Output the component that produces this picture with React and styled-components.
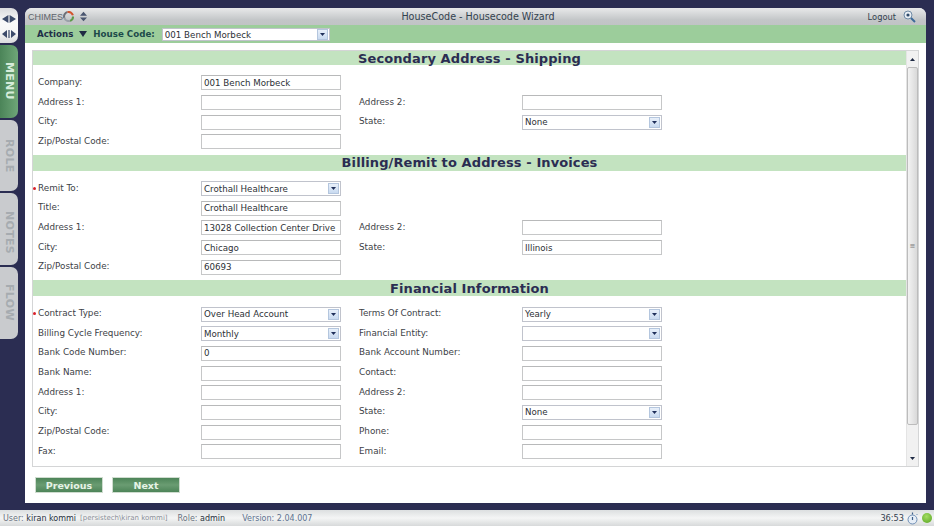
import styled, { createGlobalStyle } from "styled-components"

const Global = createGlobalStyle`
  html, body { margin: 0; padding: 0; height: 100%; overflow: hidden; }
  body { background: #2b2d52; font-family: "DejaVu Sans", Verdana, sans-serif; font-size: 8.8px; color: #3c4048; }
`

const Page = styled.div`
  width: 934px;
  height: 526px;
  display: grid;
  grid-template: 510px 16px / 25px 901px 8px;
  grid-template-areas:
    "side win ."
    "foot foot foot";
`

const Side = styled.div`
  grid-area: side;
  display: flex;
  flex-direction: column;
  align-items: flex-start;
  padding-top: 8px;
  gap: 2px;
`

const Arrows = styled.div`
  width: 18px;
  height: 35px;
  box-sizing: border-box;
  padding-top: 7px;
  display: flex;
  flex-direction: column;
  align-items: center;
  gap: 7px;
  background: linear-gradient(#d9dadd, #fafafa 40%, #f6f6f6 70%, #d9dadd);
  border-radius: 0 7px 7px 0;
`

const Tab = styled.div`
  width: 18px;
  height: ${({ $h }) => $h}px;
  display: flex;
  justify-content: flex-start;
  align-items: center;
  box-sizing: border-box;
  padding-top: ${({ $pad }) => $pad}px;
  writing-mode: vertical-rl;
  font-size: 11px;
  font-weight: bold;
  line-height: 16px;
  letter-spacing: 0.3px;
  border-radius: 0 7px 7px 0;
  color: ${({ $active }) => ($active ? "#d6ecda" : "#a6abb0")};
  background: ${({ $active }) =>
    $active ? "linear-gradient(90deg, #4b8458, #6ea678)" : "#c9cbce"};
`

const Win = styled.div`
  grid-area: win;
  margin: 8px 0 7px;
  background: #fff;
  border-radius: 7px 7px 0 0;
  display: flex;
  flex-direction: column;
`

const TitleBar = styled.div`
  height: 17px;
  flex: none;
  border-radius: 7px 7px 0 0;
  background: linear-gradient(#e8e9ea, #c3c6c8 70%, #c0c3c5);
  display: grid;
  grid-template-columns: 1fr auto 1fr;
  align-items: center;
  padding: 0 10px 0 3px;
`

const Brand = styled.div`
  display: flex;
  align-items: center;
  gap: 6px;
  font-family: "Liberation Sans", Arial, sans-serif;
  font-size: 9px;
  color: #5f646c;
`

const BrandName = styled.span`
  display: flex;
  align-items: center;
`

const WinTitle = styled.div`
  font-size: 9.6px;
  color: #33424f;
  margin-left: 12px;
`

const TitleRight = styled.div`
  display: flex;
  justify-content: flex-end;
  align-items: center;
  gap: 7px;
  font-size: 8.3px;
  color: #33424f;
`

const ActionBar = styled.div`
  height: 18px;
  flex: none;
  box-sizing: border-box;
  background: #9ccd9b;
  display: flex;
  align-items: center;
  padding-left: 12px;
  font-weight: bold;
  font-size: 8.7px;
  color: #1f2f48;
`

const Actions = styled.span`
  display: flex;
  align-items: center;
  gap: 6px;
  margin-right: 6px;
`

const HouseLabel = styled.span`
  color: #1d4a4a;
  margin-right: 7px;
`

const Panel = styled.div`
  margin: 7px 7px 0 7px;
  height: 417px;
  flex: none;
  box-sizing: border-box;
  border: 1px solid #d4d5d6;
  display: flex;
`

const Form = styled.div`
  flex: 1;
  min-width: 0;
`

const Section = styled.div`
  height: ${({ $h }) => $h}px;
  margin-top: ${({ $top }) => $top}px;
  background: #c3e3c0;
  display: flex;
  align-items: center;
  justify-content: center;
  font-size: 13px;
  font-weight: bold;
  letter-spacing: 0.1px;
  color: #2b2d52;
`

const Rows = styled.div`
  display: grid;
  grid-template-columns: 163px 140px 18px 163px 140px;
  grid-auto-rows: 19.7px;
  padding: ${({ $top }) => $top}px 0 0 5px;
  align-items: center;
`

const Label = styled.div`
  position: relative;
  color: #3d4247;
  margin-top: -2px;
  grid-column: ${({ $col }) => $col};
`

const Req = styled.span`
  position: absolute;
  left: -5px;
  top: 4px;
  width: 3px;
  height: 3px;
  border-radius: 50%;
  background: #d8202a;
`

const Field = styled.input`
  grid-column: ${({ $col }) => $col};
  width: 140px;
  height: 15px;
  box-sizing: border-box;
  margin: 0;
  padding: 0 2px;
  border: 1px solid #c6c7c8;
  border-top-color: #b8b9ba;
  background: #fff;
  font: 8.7px "DejaVu Sans", Verdana, sans-serif;
  color: #2c3036;
  outline: none;
`

const Select = styled.div`
  grid-column: ${({ $col }) => $col};
  width: 140px;
  height: 15px;
  box-sizing: border-box;
  border: 1px solid #c0c3cc;
  display: flex;
  align-items: center;
  padding: 0 1px 0 2px;
  font-size: 8.7px;
  color: #2c3036;
  background: #fff;
`

const HouseSelect = styled(Select)`
  width: 168px;
  height: 13px;
  margin-top: 1px;
  font-weight: normal;
`

const SelectBtn = styled.span`
  width: 11px;
  height: 11px;
  margin-left: auto;
  box-sizing: border-box;
  border: 1px solid #b4c6de;
  background: linear-gradient(#e8f0fa, #c9daf0);
  display: flex;
  align-items: center;
  justify-content: center;
`

const Scroll = styled.div`
  width: 12px;
  flex: none;
  box-sizing: border-box;
  background: #f1f1f1;
  display: flex;
  flex-direction: column;
  align-items: center;
  border-left: 1px solid #e4e4e4;
`

const ScrollEnd = styled.div`
  height: 16px;
  flex: none;
  display: flex;
  align-items: center;
  justify-content: center;
`

const Thumb = styled.div`
  width: 11px;
  flex: 1;
  box-sizing: border-box;
  margin-bottom: 25px;
  border: 1px solid #bcbcbc;
  border-radius: 2px;
  background: linear-gradient(90deg, #f3f3f3, #d9d9d9);
  display: flex;
  align-items: center;
  justify-content: center;
  color: #7a7a7a;
  font-size: 7px;
`

const Buttons = styled.div`
  display: flex;
  gap: 9px;
  margin: 10px 0 0 10px;
`

const Button = styled.button`
  width: 68px;
  height: 16px;
  padding: 0;
  border: 1px solid #cfdccf;
  background: linear-gradient(#4d8458, #6a9c72 50%, #4d8458);
  color: #e6f3e6;
  font: bold 9.5px "DejaVu Sans", Verdana, sans-serif;
`

const Footer = styled.div`
  grid-area: foot;
  background: linear-gradient(#dcdfe0, #f4f5f5 50%, #d7d9da);
  display: flex;
  align-items: center;
  justify-content: space-between;
  padding: 0 2px 0 3px;
  font-size: 8px;
  color: #6b7380;
`

const FootLeft = styled.div`
  display: flex;
  align-items: center;
`

const Strong = styled.span`
  color: #26303c;
`

const Tiny = styled.span`
  font-size: 7px;
  color: #8a8f98;
  margin: 0 10px 0 4px;
`

const Version = styled.span`
  color: #5d7290;
  margin-left: 17px;
`

const FootRight = styled.div`
  display: flex;
  align-items: center;
  gap: 3px;
  font-size: 8.2px;
  color: #33424f;
`

const Led = styled.span`
  width: 10px;
  height: 10px;
  margin-left: 1px;
  border-radius: 50%;
  background: radial-gradient(circle at 45% 35%, #a4dd62, #55a320);
`

const Tri = ({ size = 5, down = true, color = "#1f2a44" }) => (
  <svg width={size + 2} height={size} viewBox="0 0 7 5" preserveAspectRatio="none">
    <path d={down ? "M0 0h7L3.5 5z" : "M0 5h7L3.5 0z"} fill={color} />
  </svg>
)

const SideArrows = () => (
  <>
    <svg width="14" height="8" viewBox="0 0 14 8">
      <path d="M0 4L6.4 0v8zM14 4L7.6 0v8z" fill="#3c4a6a" />
    </svg>
    <svg width="14" height="8" viewBox="0 0 14 8">
      <path d="M0 4L5 0v8zM14 4L9 0v8z" fill="#3c4a6a" />
      <path d="M6.4 0h1.2v8H6.4z" fill="#3c4a6a" />
    </svg>
  </>
)

const ChimesLogo = () => (
  <svg width="11" height="11" viewBox="0 0 12 12" fill="none" strokeWidth="2.2">
    <path d="M1.4 7.5A5 5 0 0 1 5 1.1" stroke="#6d7078" />
    <path d="M5 1.1a5 5 0 0 1 5.8 3.6" stroke="#d2542e" />
    <path d="M11 6a5 5 0 0 1-3.5 4.8" stroke="#5d9a4a" />
    <path d="M7.5 10.8a5 5 0 0 1-6-3.3" stroke="#9aa0a8" />
  </svg>
)

const UpDown = () => (
  <svg width="7" height="11" viewBox="0 0 8 11">
    <path d="M4 0l4 4.5H0zM4 11L0 6.5h8z" fill="#4a5670" />
  </svg>
)

const Magnifier = () => (
  <svg width="13" height="13" viewBox="0 0 13 13" fill="none">
    <circle cx="5" cy="5" r="4" fill="#e8eef4" stroke="#6f8aa5" />
    <circle cx="5" cy="5" r="1.6" fill="#2f4a6a" />
    <path d="M8 8l4 4" stroke="#3c6a9a" strokeWidth="2" />
  </svg>
)

const Stopwatch = () => (
  <svg width="11" height="13" viewBox="0 0 11 13" fill="none">
    <circle cx="5.5" cy="7.5" r="4.5" fill="#e6eef7" stroke="#6f8fb5" />
    <path d="M5.5 0.5v2M5.5 5v3" stroke="#3c5f8a" strokeWidth="1.2" />
    <path d="M9.5 2l1 1" stroke="#6f8fb5" />
  </svg>
)

const ArrowDown = () => (
  <svg width="5" height="3" viewBox="0 0 5 3">
    <path d="M0 0h5L2.5 3z" fill="#1f2f5a" />
  </svg>
)

const Input = ({ col, value = "" }) => <Field $col={col} value={value} readOnly />

const Drop = ({ col, value = "" }) => (
  <Select $col={col}>
    {value}
    <SelectBtn>
      <ArrowDown />
    </SelectBtn>
  </Select>
)

const shipping = [
  { l: "Company:", v: "001 Bench Morbeck" },
  { l: "Address 1:", l2: "Address 2:", f2: "" },
  { l: "City:", l2: "State:", s2: "None" },
  { l: "Zip/Postal Code:" },
]

const billing = [
  { l: "Remit To:", req: true, s: "Crothall Healthcare" },
  { l: "Title:", v: "Crothall Healthcare" },
  { l: "Address 1:", v: "13028 Collection Center Drive", l2: "Address 2:", f2: "" },
  { l: "City:", v: "Chicago", l2: "State:", f2: "Illinois" },
  { l: "Zip/Postal Code:", v: "60693" },
]

const financial = [
  { l: "Contract Type:", req: true, s: "Over Head Account", l2: "Terms Of Contract:", s2: "Yearly" },
  { l: "Billing Cycle Frequency:", s: "Monthly", l2: "Financial Entity:", s2: "" },
  { l: "Bank Code Number:", v: "0", l2: "Bank Account Number:", f2: "" },
  { l: "Bank Name:", l2: "Contact:", f2: "" },
  { l: "Address 1:", l2: "Address 2:", f2: "" },
  { l: "City:", l2: "State:", s2: "None" },
  { l: "Zip/Postal Code:", l2: "Phone:", f2: "" },
  { l: "Fax:", l2: "Email:", f2: "" },
]

const FormRows = ({ rows, top }) => (
  <Rows $top={top}>
    {rows.map((r, i) => [
      <Label key={`a${i}`} $col={1}>
        {r.req && <Req />}
        {r.l}
      </Label>,
      r.s !== undefined ? (
        <Drop key={`b${i}`} col={2} value={r.s} />
      ) : (
        <Input key={`b${i}`} col={2} value={r.v} />
      ),
      r.l2 && (
        <Label key={`c${i}`} $col={4}>
          {r.l2}
        </Label>
      ),
      r.s2 !== undefined && <Drop key={`d${i}`} col={5} value={r.s2} />,
      r.f2 !== undefined && <Input key={`e${i}`} col={5} value={r.f2} />,
    ])}
  </Rows>
)

export default function App() {
  return (
    <Page>
      <Global />
      <Side>
        <Arrows>
          <SideArrows />
        </Arrows>
        <Tab $h={73} $pad={17} $active>MENU</Tab>
        <Tab $h={71} $pad={19}>ROLE</Tab>
        <Tab $h={72} $pad={18}>NOTES</Tab>
        <Tab $h={72} $pad={17}>FLOW</Tab>
      </Side>
      <Win>
        <TitleBar>
          <Brand>
            <BrandName>
              CHIMES
              <ChimesLogo />
            </BrandName>
            <UpDown />
          </Brand>
          <WinTitle>HouseCode - Housecode Wizard</WinTitle>
          <TitleRight>
            Logout
            <Magnifier />
          </TitleRight>
        </TitleBar>
        <ActionBar>
          <Actions>
            Actions
            <Tri size={6} />
          </Actions>
          <HouseLabel>House Code:</HouseLabel>
          <HouseSelect>
            001 Bench Morbeck
            <SelectBtn>
              <ArrowDown />
            </SelectBtn>
          </HouseSelect>
        </ActionBar>
        <Panel>
          <Form>
            <Section $h={14} $top={0}>Secondary Address - Shipping</Section>
            <FormRows rows={shipping} top={8} />
            <Section $h={16} $top={3}>Billing/Remit to Address - Invoices</Section>
            <FormRows rows={billing} top={8} />
            <Section $h={16} $top={3}>Financial Information</Section>
            <FormRows rows={financial} top={8} />
          </Form>
          <Scroll>
            <ScrollEnd>
              <Tri size={3} down={false} />
            </ScrollEnd>
            <Thumb>≡</Thumb>
            <ScrollEnd>
              <Tri size={3} />
            </ScrollEnd>
          </Scroll>
        </Panel>
        <Buttons>
          <Button>Previous</Button>
          <Button>Next</Button>
        </Buttons>
      </Win>
      <Footer>
        <FootLeft>
          User:&nbsp;<Strong>kiran kommi</Strong>
          <Tiny>[persistech\kiran kommi]</Tiny>
          Role:&nbsp;<Strong>admin</Strong>
          <Version>Version: 2.04.007</Version>
        </FootLeft>
        <FootRight>
          36:53
          <Stopwatch />
          <Led />
        </FootRight>
      </Footer>
    </Page>
  )
}
